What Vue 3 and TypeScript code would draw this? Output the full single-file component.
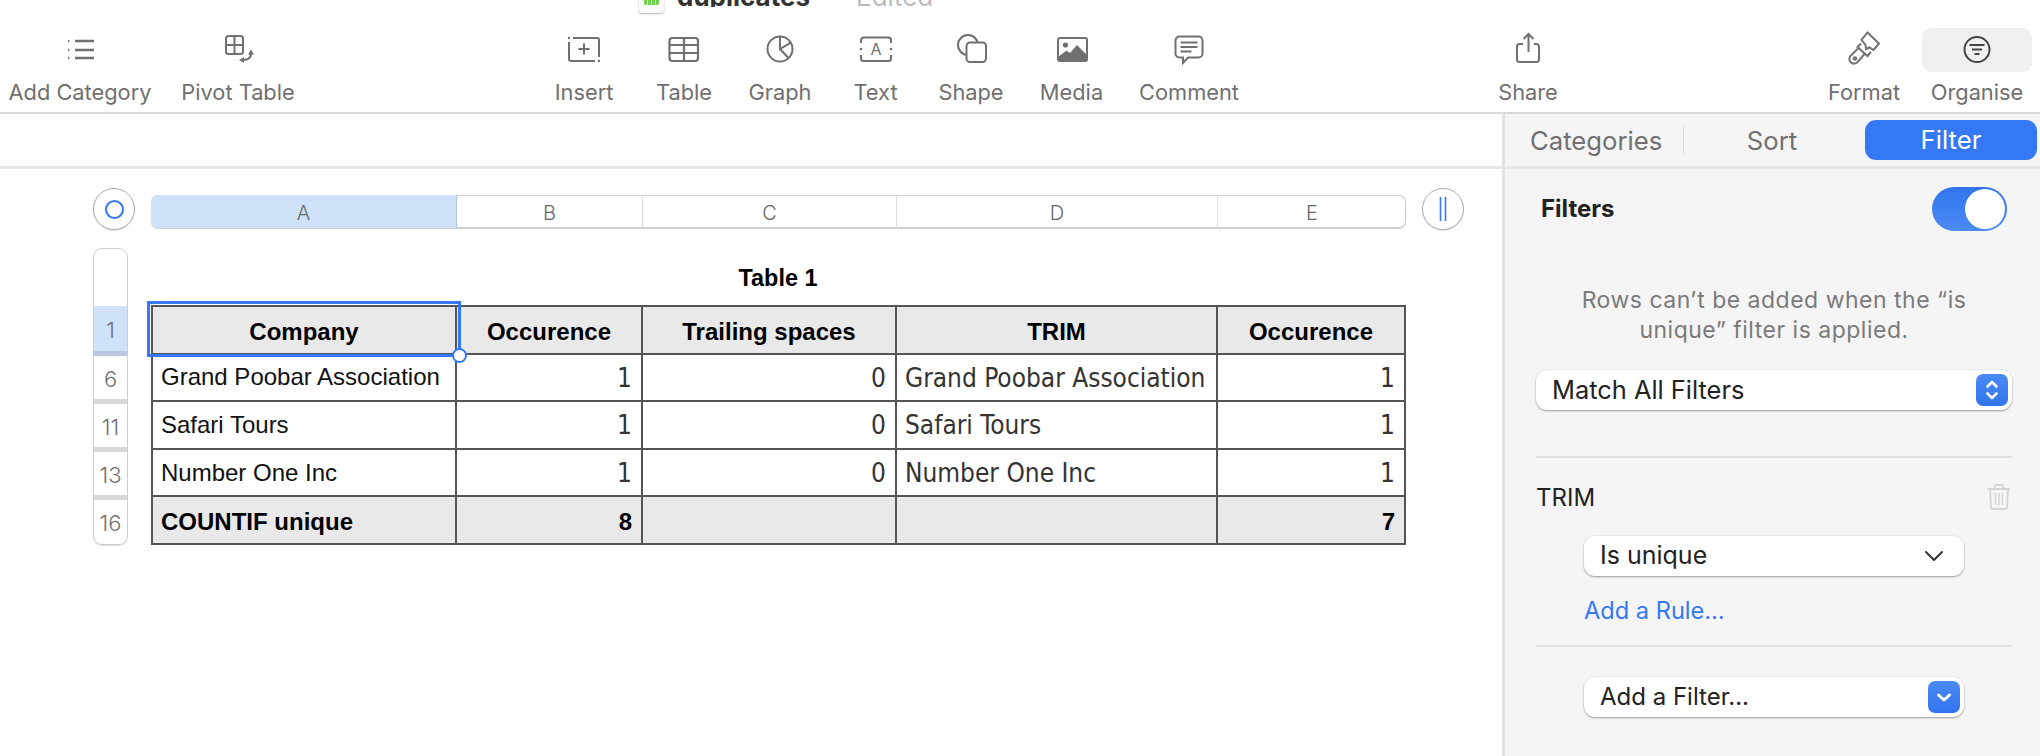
<script setup lang="ts">
interface ToolItem {
  id: string
  label: string
  width: number
}

const leftTools: ToolItem[] = [
  { id: 'category', label: 'Add Category', width: 160 },
  { id: 'pivot', label: 'Pivot Table', width: 156 },
]
const midTools: ToolItem[] = [
  { id: 'insert', label: 'Insert', width: 100 },
  { id: 'table', label: 'Table', width: 100 },
  { id: 'graph', label: 'Graph', width: 92 },
  { id: 'text', label: 'Text', width: 99 },
  { id: 'shape', label: 'Shape', width: 92 },
  { id: 'media', label: 'Media', width: 109 },
  { id: 'comment', label: 'Comment', width: 126 },
]
const shareTools: ToolItem[] = [{ id: 'share', label: 'Share', width: 100 }]
const rightTools: ToolItem[] = [
  { id: 'format', label: 'Format', width: 116 },
  { id: 'organise', label: 'Organise', width: 110 },
]
const toolGroups = [leftTools, midTools, shareTools, rightTools]

const columns = [
  { name: 'A', width: 304 },
  { name: 'B', width: 186 },
  { name: 'C', width: 254 },
  { name: 'D', width: 321 },
  { name: 'E', width: 188 },
]

const rowHeads = ['6', '11', '13']
const rows = [
  { name: 'Grand Poobar Association', count: 1, spaces: 0, trim: 'Grand Poobar Association', occ: 1 },
  { name: 'Safari Tours', count: 1, spaces: 0, trim: 'Safari Tours', occ: 1 },
  { name: 'Number One Inc', count: 1, spaces: 0, trim: 'Number One Inc', occ: 1 },
]
</script>

<template>
  <div class="app">
    <header class="toolbar">
      <div class="title-strip">
        <span class="doc-icon"><i></i></span>
        <div class="title-clip">
          <span class="doc-name">duplicates</span>
          <span class="doc-state">Edited</span>
        </div>
      </div>
      <div class="tools">
        <div v-for="(group, g) in toolGroups" :key="g" :class="['tool-group', 'group-' + g]">
          <div v-for="tool in group" :key="tool.id" class="tool" :style="{ width: tool.width + 'px' }">
            <div :class="['tool-icon', { active: tool.id === 'organise' }]">
              <svg viewBox="0 0 40 32" width="40" height="32" fill="none" stroke="#707070" stroke-width="2">
                <template v-if="tool.id === 'category'">
                  <path d="M15 7h19M15 16h19M15 24h19" stroke-width="2.4" />
                  <path d="M8 5.500l2 1.500-2 1.500zM8 14.500l2 1.500-2 1.500zM8 22.500l2 1.500-2 1.500z" fill="#707070" stroke="none" />
                </template>
                <template v-else-if="tool.id === 'pivot'">
                  <rect x="8" y="2" width="17" height="18" rx="2.500" />
                  <path d="M16.500 2v18M8 11h17" />
                  <path d="M33 19c0 4.500-3 7-8 7" stroke-width="2.200" />
                  <path d="M33 15.500l3 5h-6zM21 26l5-3v6z" fill="#707070" stroke="none" />
                </template>
                <template v-else-if="tool.id === 'insert'">
                  <path d="M9 4h24a2 2 0 0 1 2 2v17M31 27H7a2 2 0 0 1-2-2V8" />
                  <circle cx="5" cy="4" r="1.200" fill="#707070" stroke="none" />
                  <circle cx="35" cy="27" r="1.200" fill="#707070" stroke="none" />
                  <path d="M20 9.500v11M14.500 15h11" />
                </template>
                <template v-else-if="tool.id === 'table'">
                  <rect x="5.500" y="4" width="28.500" height="23" rx="3" stroke-width="2.200" />
                  <path d="M5.500 11h28.500M5.500 19h28.500M20 4v23" stroke-width="2.200" />
                </template>
                <template v-else-if="tool.id === 'graph'">
                  <circle cx="20" cy="15" r="12.500" />
                  <path d="M20 2.500V15l10.800-6.300M20 15l8.500 9" />
                </template>
                <template v-else-if="tool.id === 'text'">
                  <path d="M5 9V6a2.500 2.500 0 0 1 2.500-2.500h25A2.500 2.500 0 0 1 35 6v3M5 21v3.500A2.500 2.500 0 0 0 7.500 27h25a2.500 2.500 0 0 0 2.500-2.500V21" />
                  <circle cx="5" cy="15" r="1.300" fill="#707070" stroke="none" />
                  <circle cx="35" cy="15" r="1.300" fill="#707070" stroke="none" />
                  <text x="20" y="21" class="icon-letter">A</text>
                </template>
                <template v-else-if="tool.id === 'shape'">
                  <circle cx="17" cy="11" r="10" />
                  <rect x="15.500" y="8.500" width="19.500" height="19.500" rx="3.500" fill="#fff" />
                </template>
                <template v-else-if="tool.id === 'media'">
                  <rect x="6" y="4" width="29" height="23" rx="2" />
                  <circle cx="13.500" cy="11" r="2.600" fill="#707070" stroke="none" />
                  <path d="M6 23l8.500-6.500 3.500 2.500 7-8 10 10v4.500a2 2 0 0 1-2 2H8a2 2 0 0 1-2-2z" fill="#707070" stroke="none" />
                </template>
                <template v-else-if="tool.id === 'comment'">
                  <path d="M10.500 2.500h19a4 4 0 0 1 4 4v13a4 4 0 0 1-4 4H19l-5 5.500v-5.500h-3.500a4 4 0 0 1-4-4v-13a4 4 0 0 1 4-4z" />
                  <path d="M11.500 8.500h17M11.500 13h17M11.500 17.500h11" />
                </template>
                <template v-else-if="tool.id === 'share'">
                  <path d="M15 10h-3.500a2.500 2.500 0 0 0-2.500 2.500v13a2.500 2.500 0 0 0 2.500 2.500h17a2.500 2.500 0 0 0 2.500-2.500v-13a2.500 2.500 0 0 0-2.500-2.500H26" />
                  <path d="M20.500 0v18M15.500 5l5-5 5 5" />
                </template>
                <template v-else-if="tool.id === 'format'">
                  <path d="M23.500-1.500L35 9.500 29.500 16 25.500 13.500 22 15l-.5-4-4-5z" />
                  <path d="M17 9.500l-3.500 3.500L23.500 22l3.500-4" />
                  <path d="M14.500 14L7.500 21a4.700 4.700 0 1 0 6.500 6.500L20.500 20" />
                  <circle cx="11" cy="24.500" r="1.300" />
                </template>
                <template v-else-if="tool.id === 'organise'">
                  <g stroke="#444">
                    <circle cx="20" cy="15.500" r="12.500" />
                    <path d="M12.500 11h15M15 15.500h10M17.500 20h5" />
                  </g>
                </template>
              </svg>
            </div>
            <span class="tool-label">{{ tool.label }}</span>
          </div>
        </div>
      </div>
    </header>

    <div class="body">
      <main class="canvas">
        <div class="strip"></div>
        <div class="sheet">
          <div class="corner-btn">
            <span class="ring"></span>
          </div>
          <div class="col-bar">
            <div
              v-for="col in columns"
              :key="col.name"
              :class="['col-head', { selected: col.name === 'A' }]"
              :style="{ width: col.width + 'px' }"
            >{{ col.name }}</div>
          </div>
          <div class="corner-btn">
            <svg viewBox="0 0 8 24" width="8" height="24" stroke="#3478f6" stroke-width="1.600">
              <path d="M1.500 0v24M6.500 0v24" />
            </svg>
          </div>

          <div class="row-bar">
            <div class="row-top"></div>
            <div class="row-head selected">1</div>
            <div v-for="num in rowHeads" :key="num" class="row-head">{{ num }}</div>
            <div class="row-head last">16</div>
          </div>

          <div class="table-block">
            <div class="table-title">Table 1</div>
            <div class="table-wrap">
              <table class="data">
                <colgroup>
                  <col v-for="col in columns" :key="col.name" :style="{ width: col.width + 'px' }" />
                </colgroup>
                <tbody>
                  <tr class="head">
                    <td>Company</td>
                    <td>Occurence</td>
                    <td>Trailing spaces</td>
                    <td>TRIM</td>
                    <td>Occurence</td>
                  </tr>
                  <tr v-for="row in rows" :key="row.name">
                    <td class="name">{{ row.name }}</td>
                    <td class="num">{{ row.count }}</td>
                    <td class="num">{{ row.spaces }}</td>
                    <td class="trim">{{ row.trim }}</td>
                    <td class="num">{{ row.occ }}</td>
                  </tr>
                  <tr class="foot">
                    <td class="left">COUNTIF unique</td>
                    <td>8</td>
                    <td></td>
                    <td></td>
                    <td>7</td>
                  </tr>
                </tbody>
              </table>
              <div class="selection"><span class="handle"></span></div>
            </div>
          </div>
        </div>
      </main>

      <aside class="panel">
        <nav class="tabs">
          <span class="tab cat">Categories</span>
          <span class="tab-sep"></span>
          <span class="tab sort">Sort</span>
          <span class="tab filter">Filter</span>
        </nav>
        <section class="panel-body">
          <div class="filter-row">
            <span class="filter-title">Filters</span>
            <span class="toggle"><i></i></span>
          </div>
          <p class="note">Rows can’t be added when the “is<br />unique” filter is applied.</p>
          <div class="select match">
            <span>Match All Filters</span>
            <span class="stepper">
              <svg viewBox="0 0 32 32" width="32" height="32" fill="none" stroke="#fff" stroke-width="2.600" stroke-linecap="round" stroke-linejoin="round">
                <path d="M11.500 12.500L16 8l4.500 4.500M11.500 19.500L16 24l4.500-4.500" />
              </svg>
            </span>
          </div>
          <hr class="rule first" />
          <div class="trim-row">
            <span>TRIM</span>
            <svg viewBox="0 0 22 26" width="22" height="26" fill="none" stroke="#d4d4d4" stroke-width="1.800">
              <path d="M0 5h22M7 5V2.500A1.500 1.500 0 0 1 8.500 1h5A1.500 1.500 0 0 1 15 2.500V5" />
              <path d="M2 5l1 18.500A1.500 1.500 0 0 0 4.500 25h13a1.500 1.500 0 0 0 1.500-1.500L20 5" />
              <path d="M7.500 9v12M11 9v12M14.500 9v12" stroke-width="1.400" />
            </svg>
          </div>
          <div class="select unique">
            <span>Is unique</span>
            <svg class="chev" viewBox="0 0 20 12" width="20" height="12" fill="none" stroke="#333" stroke-width="2" stroke-linecap="round" stroke-linejoin="round">
              <path d="M2 2l8 8 8-8" />
            </svg>
          </div>
          <a class="add-rule">Add a Rule…</a>
          <hr class="rule second" />
          <div class="select add">
            <span>Add a Filter…</span>
            <span class="stepper">
              <svg viewBox="0 0 32 32" width="32" height="32" fill="none" stroke="#fff" stroke-width="3" stroke-linecap="round" stroke-linejoin="round">
                <path d="M10.500 14l5.500 5 5.500-5" />
              </svg>
            </span>
          </div>
        </section>
      </aside>
    </div>
  </div>
</template>

<style>
html,
body {
  margin: 0;
  background: #fff;
}
</style>

<style scoped>
.app {
  width: 2040px;
  height: 756px;
  overflow: hidden;
  font-family: Inter, "Liberation Sans", sans-serif;
  color: #222;
}

.toolbar {
  height: 112px;
  border-bottom: 2px solid #dadada;
  background: #fff;
}
.title-strip {
  height: 28px;
  overflow: hidden;
  display: flex;
  align-items: flex-start;
  padding-left: 639px;
}
.doc-icon {
  width: 25px;
  height: 26px;
  margin-top: -13px;
  background: #fafafa;
  border-radius: 3px;
  box-shadow: 0 1px 2px rgba(0, 0, 0, 0.3);
  display: flex;
  justify-content: center;
  align-items: flex-end;
  padding-bottom: 8px;
  box-sizing: border-box;
}
.doc-icon i {
  display: block;
  width: 15px;
  height: 11px;
  border-radius: 2px;
  background: repeating-linear-gradient(90deg, #6ed04f 0 3px, #c4edb4 3px 4px);
}
.title-clip {
  display: flex;
  height: 7px;
  overflow: hidden;
  align-items: flex-start;
}
.doc-name {
  margin-left: 13px;
  margin-top: -17px;
  font-size: 26px;
  line-height: 28px;
  font-weight: 700;
  color: #333;
}
.doc-state {
  margin-left: 46px;
  margin-top: -17px;
  font-size: 26px;
  line-height: 28px;
  color: #bcbcbc;
}

.tools {
  display: flex;
}
.tool-group {
  display: flex;
}
.group-1 {
  margin-left: 218px;
}
.group-2 {
  margin-left: 226px;
}
.group-3 {
  margin-left: 228px;
}
.tool {
  display: flex;
  flex-direction: column;
  align-items: center;
}
.tool-icon {
  width: 100%;
  height: 44px;
  display: flex;
  align-items: center;
  justify-content: center;
  border-radius: 9px;
}
.tool-icon svg {
  overflow: visible;
}
.tool-icon.active {
  background: #f0f0f0;
}
.icon-letter {
  font-family: Inter, "Liberation Sans", sans-serif;
  font-size: 16px;
  fill: #707070;
  stroke: none;
  text-anchor: middle;
}
.tool-label {
  margin-top: 8px;
  font-size: 21.800px;
  line-height: 24px;
  color: #707070;
  white-space: nowrap;
}

.body {
  display: grid;
  grid-template-columns: 1502px 538px;
  height: 642px;
}

.strip {
  height: 52px;
  border-bottom: 3px solid #e6e6e6;
}

.sheet {
  display: grid;
  grid-template-columns: 42px 1253px 42px;
  grid-template-rows: 42px auto;
  column-gap: 17px;
  margin: 19px 0 0 93px;
}
.corner-btn {
  width: 42px;
  height: 42px;
  border-radius: 50%;
  background: #fff;
  border: 1px solid #adadad;
  box-shadow: 0 1px 1px rgba(0, 0, 0, 0.12);
  box-sizing: border-box;
  display: flex;
  align-items: center;
  justify-content: center;
}
.ring {
  width: 19px;
  height: 19px;
  border: 2px solid #3478f6;
  border-radius: 50%;
  box-sizing: border-box;
}
.col-bar {
  display: flex;
  height: 33px;
  margin: 7px -1px 0;
  border-radius: 7px;
  overflow: hidden;
  box-shadow: inset 0 0 0 1px #cfcfcf, 0 1px 1px rgba(0, 0, 0, 0.2);
}
.col-head {
  display: flex;
  align-items: center;
  justify-content: center;
  box-sizing: border-box;
  font-size: 20px;
  font-weight: 300;
  color: #666;
  border-right: 1px solid #dedede;
  padding-top: 2px;
}
.col-head:first-child {
  flex: 0 0 306px;
}
.col-head:last-child {
  border-right: 0;
}
.col-head.selected {
  background: #cfe2fa;
  border-right-color: #b3c6e0;
}

.row-bar {
  grid-column: 1;
  width: 33px;
  margin: 18px 0 0 0;
  border: 1px solid #cfcfcf;
  border-radius: 9px;
  box-shadow: 0 1px 1px rgba(0, 0, 0, 0.15);
  overflow: hidden;
  height: 295px;
  display: flex;
  flex-direction: column;
}
.row-top {
  height: 57px;
}
.row-head {
  height: 48px;
  box-sizing: border-box;
  display: flex;
  align-items: center;
  justify-content: center;
  font-size: 22px;
  font-weight: 300;
  color: #707070;
  border-bottom: 5px solid #d8d8d8;
  padding-top: 2px;
}
.row-head.selected {
  height: 50px;
  background: #cfe2fa;
  border-bottom-color: #b9c8e0;
}
.row-head.last {
  border-bottom: 0;
  height: 44px;
}

.table-block {
  grid-column: 2;
  margin-left: -1px;
}
.table-title {
  height: 58px;
  margin-top: 17px;
  padding-top: 18px;
  box-sizing: border-box;
  text-align: center;
  font: 700 23.400px/27px "Liberation Sans", Arial, sans-serif;
  color: #000;
}
.table-wrap {
  position: relative;
  width: 1253px;
}
.data {
  border-collapse: collapse;
  table-layout: fixed;
  width: 1253px;
  font-family: "Liberation Sans", Arial, sans-serif;
  font-size: 24px;
  color: #111;
}
.data td {
  border: 2px solid #555;
  height: 47.600px;
  padding: 0 9px;
  box-sizing: border-box;
  line-height: 28px;
  white-space: nowrap;
  overflow: hidden;
}
.head td {
  background: #e9e9e9;
  text-align: center;
  font-weight: 700;
  color: #000;
  padding-top: 4px;
}
.data .name {
  padding-left: 8px;
}
.data .num,
.data .trim {
  font-family: "DejaVu Sans", sans-serif;
  font-stretch: condensed;
  font-size: 26px;
  color: #333;
  padding-top: 1px;
}
.data .num {
  text-align: right;
}
.data .trim {
  padding-left: 8px;
}
.foot td {
  background: #e9e9e9;
  font-weight: 700;
  color: #000;
  text-align: right;
  padding-top: 4px;
}
.foot td.left {
  text-align: left;
  padding-left: 8px;
}
.selection {
  position: absolute;
  left: -4px;
  top: -4px;
  width: 314px;
  height: 56px;
  border: 3px solid #3478f6;
  box-sizing: border-box;
  pointer-events: none;
}
.handle {
  position: absolute;
  right: -9px;
  bottom: -9px;
  width: 15px;
  height: 15px;
  border-radius: 50%;
  background: #fff;
  border: 2.500px solid #3478f6;
  box-sizing: border-box;
}

.panel {
  background: #f5f5f5;
  border-left: 3px solid #e2e2e2;
  box-sizing: border-box;
}
.tabs {
  height: 52px;
  border-bottom: 3px solid #e6e6e6;
  display: flex;
  align-items: center;
  font-size: 25.700px;
  color: #707070;
}
.tab {
  white-space: nowrap;
}
.tab.cat {
  width: 178px;
  padding-left: 25px;
  box-sizing: border-box;
}
.tab-sep {
  width: 1px;
  height: 28px;
  background: #dddddd;
}
.tab.sort {
  width: 176px;
  text-align: center;
}
.tab.filter {
  width: 172px;
  height: 40px;
  margin-left: 5px;
  margin-top: -1px;
  border-radius: 11px;
  background: #3478f6;
  color: #fff;
  display: flex;
  align-items: center;
  justify-content: center;
}

.panel-body {
  padding: 0 28px 0 31px;
}
.filter-row {
  display: flex;
  justify-content: space-between;
  align-items: center;
  padding: 0 5px;
  height: 44px;
  margin-top: 18px;
}
.filter-title {
  font-size: 24px;
  font-weight: 700;
  color: #222;
  padding-bottom: 2px;
}
.toggle {
  width: 75px;
  height: 44px;
  border-radius: 22px;
  background: linear-gradient(#3274ee, #4a8bf3);
  display: flex;
  justify-content: flex-end;
  align-items: center;
  padding-right: 2px;
  box-sizing: border-box;
}
.toggle i {
  display: block;
  width: 40px;
  height: 40px;
  border-radius: 50%;
  background: #fff;
}
.note {
  margin: 54px 0 25px;
  text-align: center;
  font-size: 23px;
  letter-spacing: 0.500px;
  line-height: 30px;
  color: #7a7a7a;
}
.select {
  position: relative;
  height: 40px;
  display: flex;
  align-items: center;
  justify-content: space-between;
  background: #fff;
  border-radius: 11px;
  box-shadow: 0 1px 2px rgba(0, 0, 0, 0.35), 0 0 0 0.500px rgba(0, 0, 0, 0.06);
  padding-left: 16px;
  font-size: 25px;
  color: #222;
}
.select > span:first-child {
  padding-bottom: 2px;
}
.select.match {
  width: 476px;
  box-sizing: border-box;
  font-size: 25.400px;
}
.stepper {
  width: 32px;
  height: 32px;
  margin-right: 4px;
  border-radius: 7px;
  background: linear-gradient(#4a8bf3, #3274ee);
  display: block;
  padding: 0 !important;
}
.stepper svg {
  display: block;
}
.rule {
  border: 0;
  height: 2px;
  background: #e0e0e0;
  margin: 0;
}
.rule.first {
  margin-top: 46px;
}
.trim-row {
  display: flex;
  justify-content: space-between;
  align-items: center;
  height: 28px;
  margin-top: 25px;
  font-size: 24px;
  color: #222;
  padding-right: 2px;
}
.select.unique,
.select.add {
  width: 380px;
  margin-left: 48px;
  box-sizing: border-box;
}
.select.unique {
  margin-top: 25px;
}
.select.add {
  margin-top: 30px;
  font-size: 24px;
}
.chev {
  margin-right: 20px;
}
.add-rule {
  display: block;
  margin: 22px 0 0 48px;
  font-size: 23.600px;
  line-height: 26px;
  color: #3478f6;
}
.rule.second {
  margin-top: 21px;
}
</style>
